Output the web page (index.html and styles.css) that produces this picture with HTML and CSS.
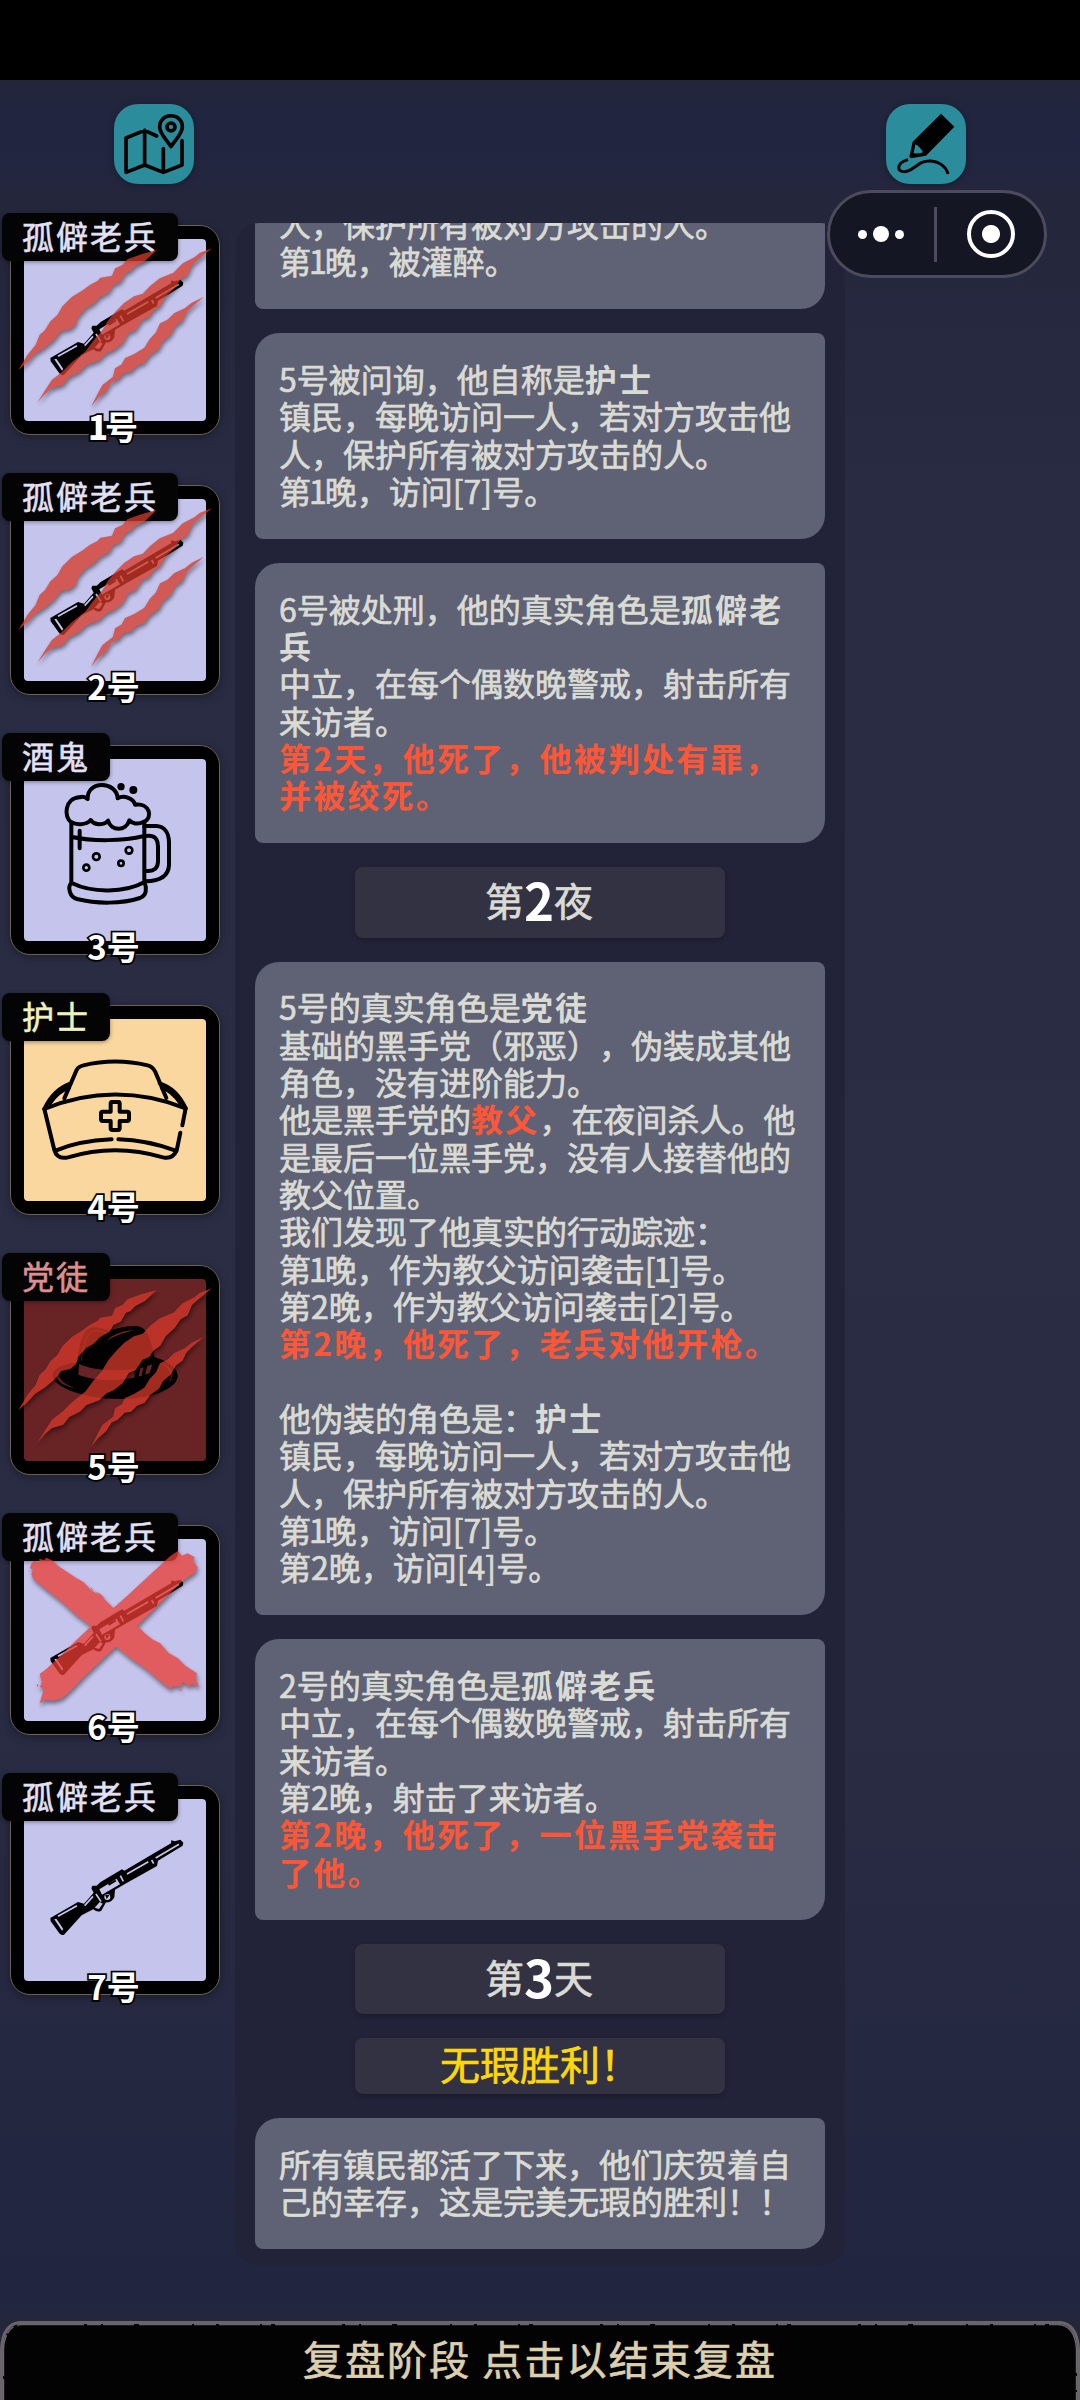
FILE: index.html
```html
<!DOCTYPE html>
<html lang="zh-CN">
<head>
<meta charset="utf-8">
<title>复盘阶段</title>
<link rel="stylesheet" href="styles.css">
</head>
<body>
<svg class="defs" aria-hidden="true">
  <symbol id="gun" viewBox="30 885 630 630">
    <path d="M151 1284 234 1236 252 1241 281 1208 274 1195 277 1187 290 1187 302 1176 366 1138 373 1142 448 1098 513 1060 514 1051 524 1054 541 1049 550 1058 548 1067 474 1112 471 1128 376 1181 345 1199 343 1222Q335 1239 318 1237L304 1262Q293 1269 280 1258L262 1267 245 1276 192 1334Q184 1338 178 1330L152 1294Z"/>
    <g class="gun-light">
      <path d="M163 1288 169 1286 190 1317 186 1322Z"/>
      <path d="M298 1198 350 1166 360 1183 306 1214Z"/>
      <path d="M284 1253 299 1236 308 1241 297 1257Z"/>
      <circle cx="322" cy="1221" r="9"/>
    </g>
    <path class="gun-line" d="M174 1279 231 1247M381 1152 445 1115M467 1104 537 1063M361 1157 370 1174M455 1110 461 1121M254 1247 279 1219M288 1212 303 1235"/>
    <path d="M324 1181 346 1169 349 1174 327 1187ZM315 1213 328 1216 320 1227Z"/>
  </symbol>

  <symbol id="beer" viewBox="30 855 630 630">
    <g class="line">
      <path d="M214 1087C190 1072 194 1014 239 1012 249 1008 259 1013 263 1017 260 961 350 962 353 1015 372 1004 401 1016 405 1034 450 1027 461 1076 430 1086 413 1095 396 1090 388 1081 378 1114 334 1115 324 1082 313 1097 283 1096 272 1080 258 1096 228 1095 214 1087Z"/>
      <path d="M214 1087V1270M433 1087V1270M217 1131C275 1144 370 1144 432 1128M217 1270C275 1299 375 1299 434 1266M213 1270C203 1282 208 1310 231 1317 290 1332 365 1332 420 1314 440 1306 441 1285 434 1268"/>
      <path d="M433 1098H468C494 1099 507 1120 507 1148V1216C505 1248 480 1263 437 1264M437 1128C465 1124 473 1136 474 1160V1200C475 1224 463 1236 437 1232M239 1112V1165"/>
      <g class="bubble"><circle cx="289" cy="1190" r="10"/><circle cx="387" cy="1171" r="10"/><circle cx="363" cy="1210" r="8"/><circle cx="259" cy="1223" r="9"/></g>
    </g>
    <circle cx="363" cy="980" r="11"/><circle cx="400" cy="990" r="12"/>
  </symbol>

  <symbol id="nurse" viewBox="30 75 630 630">
    <g class="line">
      <path d="M133 387C270 329 420 329 557 385M193 355 226 279Q231 260 250 256 345 233 443 256 459 260 466 276L499 354M213 310C180 321 151 349 133 387M479 310C514 321 541 350 557 385"/>
      <path d="M150 369C170 341 193 327 207 324M541 369C522 341 500 327 486 324"/>
      <path d="M133 387 163 510Q171 539 204 532 345 489 489 532 517 539 530 512L541 458M547 436 557 385M167 512C220 489 270 481 335 478M355 478C420 480 475 493 527 512"/>
      <path d="M334 366H356Q359 366 359 371V395H382Q387 395 387 400V418Q387 423 382 423H359V445Q359 450 354 450H337Q332 450 332 445V423H308Q303 423 303 418V400Q303 395 308 395H332V371Q332 366 337 366Z"/>
    </g>
  </symbol>

  <symbol id="hat" viewBox="30 855 630 630">
    <path d="M233 1147C235 1098 249 1042 280 1042 302 1043 312 1049 330 1051 358 1043 385 1036 411 1038 448 1043 453 1090 464 1132 509 1145 535 1167 533 1191 525 1233 443 1257 356 1257 262 1257 166 1227 158 1189 157 1166 186 1152 233 1147Z"/>
    <path class="hat-band" d="M237 1151C279 1172 350 1174 405 1167L403 1193C338 1206 276 1200 235 1184ZM421 1165 430 1162 425 1187 416 1190ZM442 1158 457 1153 449 1179 435 1184Z"/>
    <path class="hat-light" d="M319 1082C339 1061 377 1050 406 1050 371 1058 341 1070 319 1082ZM175 1175Q175 1210 227 1224 181 1218 168 1190ZM475 1147Q511 1158 517 1180 520 1196 503 1213 531 1172 475 1147Z"/>
    <path class="hat-edge" d="M245 1142C247 1102 258 1057 282 1052Q301 1050 318 1060"/>
  </symbol>

  <symbol id="claw" viewBox="30 495 630 630">
    <path d="M55 930 82 885 107 854 119 824 135 810 151 784 172 765 187 739 216 710 248 691 270 674 292 663 301 653 336 647 345 625 368 614 382 598 424 583 470 570 435 603 406 618 391 634 378 638 362 665 340 675 329 695 301 711 280 732 259 744 234 772 228 793 211 807 184 813 164 838 136 862 105 882 80 909Z"/>
    <path d="M112 1028 136 989 156 959 186 936 213 909 257 874 280 842 306 812 326 779 349 752 372 729 402 709 428 701 450 678 479 655 520 638 548 610 583 592 600 578 636 565 592 601 576 615 563 646 542 658 524 684 497 709 481 737 460 752 448 771 428 779 407 810 386 819 369 849 341 871 320 880 298 901 260 915 240 935 208 951 190 974 155 985 134 1003Z"/>
    <path d="M273 1040 291 1005 307 975 339 950 345 925 365 913 375 894 402 882 433 863 449 837 468 817 480 790 502 779 523 759 554 745 575 728 612 710 579 738 560 757 547 783 528 796 512 824 490 842 477 866 450 886 434 908 411 917 393 935 374 938 353 959 334 968 319 993 295 1014Z"/>
  </symbol>

  <symbol id="cross" viewBox="30 105 630 630">
    <path d="M94 221 101 213 119 217 118 206 132 211 139 203 158 212 176 229 206 249 229 264 251 277 274 301 301 317 323 337 340 354 381 318 427 275 475 231 510 199 534 183 546 197 563 190 584 202 580 214 593 232 584 249 552 269 510 309 463 357 412 407 437 432 459 449 480 459 505 488 534 505 556 527 591 550 587 565 597 591 575 582 566 590 550 576 540 591 521 587 513 598 489 581 437 537 391 505 348 470 318 498 289 526 252 561 214 600 187 625 160 632 137 630 119 640 126 616 132 601 120 590 126 576 119 552 139 537 178 501 223 456 273 409 229 376 182 333 137 298 101 268 94 253 99 239 90 234Z"/>
    <path d="M248 276 255 282 250 284ZM271 291 280 299 276 301ZM285 304 302 312 315 326 306 324ZM110 581 116 585 112 591ZM455 451 466 453 460 459ZM540 596 546 600 541 604Z"/>
  </symbol>
</svg>

<div class="screen">
  <div class="status"></div>
  <header class="toolbar">
    <button class="tool" aria-label="地图">
      <svg viewBox="342 132 240 240">
        <path class="map-line" d="M470 228 434 211 378 234V337L434 315 490 337 546 315V242M434 211V315M490 337V266"/>
        <path class="map-line" d="M513 260C500 238 479 222 479 201 479 156 547 156 547 201 547 222 526 238 513 260Z"/>
        <circle class="map-line" cx="513" cy="201" r="12"/>
      </svg>
    </button>
    <button class="tool" aria-label="笔记">
      <svg viewBox="618 132 240 240">
        <path fill-rule="evenodd" d="M783 161 823 200 738 287 693 295 688 291 698 245ZM706 253 701 280Q716 282 729 277 720 260 706 253Z"/>
        <path class="squiggle" d="M684 299C646 310 649 341 681 334 707 326 718 301 752 303 779 305 799 321 804 342"/>
      </svg>
    </button>
  </header>

  <div class="capsule">
    <span class="dots"><i></i><i class="big"></i><i></i></span>
    <span class="split"></span>
    <span class="ring"></span>
  </div>

  <main class="content">
    <aside class="players">
      <div class="player"><span class="role">孤僻老兵</span><svg class="art"><use href="#gun"/></svg><svg class="mark claw"><use href="#claw"/></svg><span class="num"><b class="one">1</b>号</span></div>
      <div class="player"><span class="role">孤僻老兵</span><svg class="art"><use href="#gun"/></svg><svg class="mark claw"><use href="#claw"/></svg><span class="num">2号</span></div>
      <div class="player"><span class="role">酒鬼</span><svg class="art"><use href="#beer"/></svg><span class="num">3号</span></div>
      <div class="player town"><span class="role">护士</span><svg class="art"><use href="#nurse"/></svg><span class="num">4号</span></div>
      <div class="player mafia"><span class="role">党徒</span><svg class="art"><use href="#hat"/></svg><svg class="mark claw"><use href="#claw"/></svg><span class="num">5号</span></div>
      <div class="player"><span class="role">孤僻老兵</span><svg class="art"><use href="#gun"/></svg><svg class="mark cross"><use href="#cross"/></svg><span class="num">6号</span></div>
      <div class="player"><span class="role">孤僻老兵</span><svg class="art"><use href="#gun"/></svg><span class="num">7号</span></div>
    </aside>

    <section class="log">
      <p class="card first">人，保护所有被对方攻击的人。<br>第<i class="one">1</i>晚，被灌醉。</p>
      <p class="card">5号被问询，他自称是<b>护士</b><br>镇民，每晚访问一人，若对方攻击他<br>人，保护所有被对方攻击的人。<br>第<i class="one">1</i>晚，访问[7]号。</p>
      <p class="card">6号被处刑，他的真实角色是<b>孤僻老<br>兵</b><br>中立，在每个偶数晚警戒，射击所有<br>来访者。<br><b class="dead">第2天，他死了，他被判处有罪，<br>并被绞死。</b></p>
      <h2 class="day">第<b>2</b>夜</h2>
      <p class="card">5号的真实角色是<b>党徒</b><br>基础的黑手党（邪恶），伪装成其他<br>角色，没有进阶能力。<br>他是黑手党的<b class="dead">教父</b>，在夜间杀人。他<br>是最后一位黑手党，没有人接替他的<br>教父位置。<br>我们发现了他真实的行动踪迹：<br>第<i class="one">1</i>晚，作为教父访问袭击[<i class="one">1</i>]号。<br>第2晚，作为教父访问袭击[2]号。<br><b class="dead">第2晚，他死了，老兵对他开枪。</b><br><br>他伪装的角色是：<b>护士</b><br>镇民，每晚访问一人，若对方攻击他<br>人，保护所有被对方攻击的人。<br>第<i class="one">1</i>晚，访问[7]号。<br>第2晚，访问[4]号。</p>
      <p class="card">2号的真实角色是<b>孤僻老兵</b><br>中立，在每个偶数晚警戒，射击所有<br>来访者。<br>第2晚，射击了来访者。<br><b class="dead">第2晚，他死了，一位黑手党袭击<br>了他。</b></p>
      <h2 class="day">第<b>3</b>天</h2>
      <h2 class="day victory">无瑕胜利！</h2>
      <p class="card">所有镇民都活了下来，他们庆贺着自<br>己的幸存，这是完美无瑕的胜利！！</p>
    </section>
  </main>

  <footer class="bar">
    <svg class="edge" viewBox="0 0 1080 79">
      <path class="edge-fill" d="M1.500 80V28Q3 3 20 1.500H1060Q1077 3 1078.500 28V80"/>
      <path class="edge-rough" d="M3.500 80V28Q5 4.500 22 3.500H1058Q1075 4.500 1076.500 28V80"/>
    </svg>
    <span class="bar-text">复盘阶段 点击以结束复盘</span>
  </footer>
</div>
</body>
</html>
```

FILE: styles.css
```css
* { box-sizing: border-box; }

body {
  margin: 0;
  font-family: "Noto Sans CJK SC", "Noto Sans", sans-serif;
  color: #dadbd4;
  text-spacing-trim: space-all;
}

i { font-style: normal; }

.defs { position: absolute; width: 0; height: 0; }

.screen {
  position: relative;
  width: 1080px;
  height: 2400px;
  overflow: hidden;
  display: flex;
  flex-direction: column;
  background: linear-gradient(#22253a 80px, #212541 140px, #24263c 200px, #292b43 500px, #2b2d45 1200px, #292b43 1800px, #22253f 2270px, #212540 2300px, #24263a 2321px);
}

.status { height: 80px; background: #000; flex: none; }

.toolbar {
  flex: none;
  height: 143px;
  padding: 24px 114px 0;
  display: flex;
  justify-content: space-between;
  align-items: flex-start;
}

.tool {
  width: 80px;
  height: 80px;
  padding: 0;
  border: 0;
  border-radius: 24px;
  background: #2b8c9b;
  box-shadow: 0 1px 6px rgba(0, 0, 0, .3);
}
.tool svg { display: block; width: 80px; height: 80px; }
.map-line { fill: none; stroke: #000; stroke-width: 11; stroke-linecap: round; stroke-linejoin: round; }
.squiggle { fill: none; stroke: #000; stroke-width: 9; }

.capsule {
  position: absolute;
  z-index: 3;
  left: 827px;
  top: 190px;
  width: 220px;
  height: 88px;
  border: 3px solid #4b4b5d;
  border-radius: 44px;
  background: #151623;
  display: flex;
  align-items: center;
  padding: 0 29px 0 28px;
  justify-content: space-between;
}
.dots { display: flex; align-items: center; gap: 6px; }
.dots i { width: 9px; height: 9px; border-radius: 50%; background: #fff; }
.dots .big { width: 16px; height: 16px; }
.split { width: 3px; height: 55px; background: #4b4b5d; margin-left: -1px; }
.ring {
  width: 48px;
  height: 48px;
  border-radius: 50%;
  border: 4px solid #fff;
  background: radial-gradient(circle, #fff 8.500px, transparent 9.500px);
}

.content { display: flex; align-items: flex-start; height: 2042px; margin-bottom: 56px; }

.players {
  width: 235px;
  flex: none;
  padding: 2px 0 0 10px;
  display: flex;
  flex-direction: column;
  gap: 50px;
}

.player {
  position: relative;
  width: 210px;
  height: 210px;
  border: 1.500px solid #6b6252;
  border-radius: 20px;
  background: #000;
  display: flex;
  justify-content: center;
  align-items: center;
  box-shadow: 0 2px 8px rgba(0, 0, 0, .35);
  --tile: #c5c4ec;
  --role: #e3e0f6;
}
.player.town { --tile: #f9d79f; --role: #eef0bd; }
.player.mafia { --tile: #682325; --role: #dc8f8e; }
.player::before {
  content: "";
  width: 182px;
  height: 182px;
  border-radius: 4px;
  background: var(--tile);
}
.art, .mark { position: absolute; left: -1px; top: -1px; width: 210px; height: 210px; }
.role {
  position: absolute;
  z-index: 1;
  left: -9px;
  top: -13px;
  height: 48px;
  padding: 0 20px;
  border-radius: 8px;
  background: #040405;
  color: var(--role);
  font-size: 32px;
  letter-spacing: 2px;
  line-height: 45px;
  white-space: nowrap;
  -webkit-text-stroke: .6px currentColor;
  box-shadow: 0 1px 4px rgba(0, 0, 0, .4);
}
.mark { z-index: 2; filter: drop-shadow(1px 3px 2px rgba(0, 0, 0, .6)); opacity: .76; }
.claw { fill: #d53929; }
.cross { fill: #eb3c34; }
.num {
  position: absolute;
  z-index: 3;
  left: 0;
  right: 3px;
  bottom: -16px;
  text-align: center;
  font-size: 33px;
  font-weight: 700;
  line-height: 48px;
  color: #fff;
  -webkit-text-stroke: 3.500px #000;
  paint-order: stroke fill;
}
.num .one { margin: 0 -3px 0 -1px; }

.line { fill: none; stroke: #000; stroke-width: 12; stroke-linejoin: round; stroke-linecap: round; }
.bubble { stroke-width: 8; }
.gun-light { fill: #c5c4ec; }
.gun-line { fill: none; stroke: #c5c4ec; stroke-width: 5; }
.hat-band { fill: #682325; }
.hat-light { fill: #682325; }
.hat-edge { fill: none; stroke: #682325; stroke-width: 3; }

.log {
  width: 610px;
  height: 2042px;
  padding: 0 20px 16px;
  border-radius: 24px;
  background: #222338;
  overflow: hidden;
  display: flex;
  flex-direction: column;
  align-items: center;
  gap: 24px;
}

.card {
  flex: none;
  width: 570px;
  margin: 0;
  padding: 26.900px 0 29.500px 24px;
  border-radius: 24px 8px 24px 8px;
  background: #5f6275;
  font-size: 32px;
  line-height: 37.333px;
  white-space: nowrap;
  -webkit-text-stroke: .7px currentColor;
}
.card.first { margin-top: -45px; }
.card b { letter-spacing: 2.200px; -webkit-text-stroke: 0; }
.card .dead { color: #fe5637; }
.card .one { margin: 0 -2px; }

.day {
  flex: none;
  width: 370px;
  height: 70.400px;
  margin: 0;
  border-radius: 8px;
  background: #333242;
  box-shadow: 0 2px 5px rgba(0, 0, 0, .25);
  font-size: 39px;
  font-weight: 400;
  line-height: 64px;
  text-align: center;
  text-indent: -2px;
  -webkit-text-stroke: .7px currentColor;
}
.day b {
  font-size: 51px;
  line-height: 40px;
  color: #fff;
  vertical-align: -5px;
  -webkit-text-stroke: 0;
}
.day.victory { height: 56px; line-height: 51px; font-size: 40px; text-indent: 0; color: #fdd70b; }

.bar {
  position: relative;
  flex: none;
  height: 79px;
  display: flex;
  justify-content: center;
}
.edge { position: absolute; inset: 0; width: 1080px; height: 79px; }
.edge-fill { fill: #040304; stroke: #69656b; stroke-width: 3; }
.edge-rough { fill: none; stroke: #69656b; stroke-width: 1.500; stroke-dasharray: 22 3 41 2 9 4 67 3 14 2 31 5 53 2; }
.bar-text {
  position: relative;
  font-size: 40px;
  letter-spacing: 2.100px;
  line-height: 74px;
  color: #dccfae;
  -webkit-text-stroke: .7px currentColor;
}
```
